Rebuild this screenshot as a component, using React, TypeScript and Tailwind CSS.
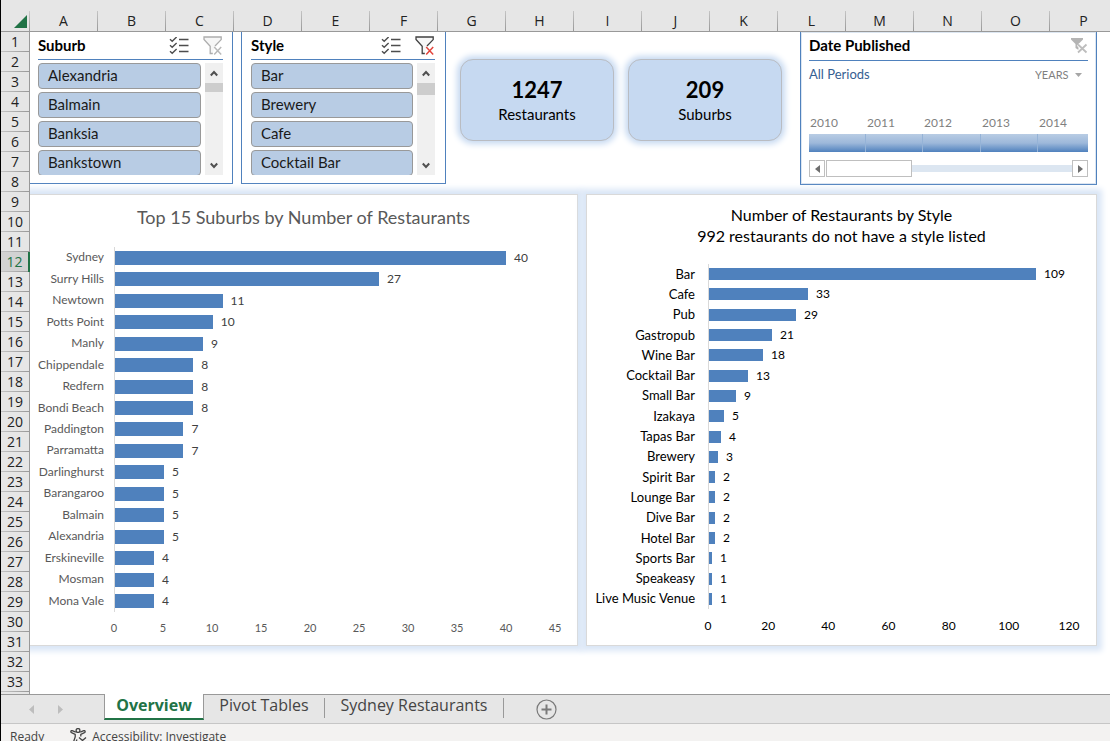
import React from "react";

type Datum = { label: string; value: number };

const columns = "ABCDEFGHIJKLMNOP".split("");
const rows = Array.from({ length: 33 }, (_, i) => i + 1);
const activeRow = 12;

const suburbData: Datum[] = [
  { label: "Sydney", value: 40 },
  { label: "Surry Hills", value: 27 },
  { label: "Newtown", value: 11 },
  { label: "Potts Point", value: 10 },
  { label: "Manly", value: 9 },
  { label: "Chippendale", value: 8 },
  { label: "Redfern", value: 8 },
  { label: "Bondi Beach", value: 8 },
  { label: "Paddington", value: 7 },
  { label: "Parramatta", value: 7 },
  { label: "Darlinghurst", value: 5 },
  { label: "Barangaroo", value: 5 },
  { label: "Balmain", value: 5 },
  { label: "Alexandria", value: 5 },
  { label: "Erskineville", value: 4 },
  { label: "Mosman", value: 4 },
  { label: "Mona Vale", value: 4 },
];

const styleData: Datum[] = [
  { label: "Bar", value: 109 },
  { label: "Cafe", value: 33 },
  { label: "Pub", value: 29 },
  { label: "Gastropub", value: 21 },
  { label: "Wine Bar", value: 18 },
  { label: "Cocktail Bar", value: 13 },
  { label: "Small Bar", value: 9 },
  { label: "Izakaya", value: 5 },
  { label: "Tapas Bar", value: 4 },
  { label: "Brewery", value: 3 },
  { label: "Spirit Bar", value: 2 },
  { label: "Lounge Bar", value: 2 },
  { label: "Dive Bar", value: 2 },
  { label: "Hotel Bar", value: 2 },
  { label: "Sports Bar", value: 1 },
  { label: "Speakeasy", value: 1 },
  { label: "Live Music Venue", value: 1 },
];

function MultiSelectIcon() {
  return (
    <svg width="20" height="18" viewBox="0 0 20 18" fill="none" stroke="#4d4d4d" strokeWidth="1.4" aria-hidden="true">
      <path d="M1 2.2 3.2 4.2 7.6 0M1 8.2l2.2 2 4.4-4.2M1 14.2l2.2 2 4.4-4.2" />
      <path d="M10 2.5h9.5M10 8.5h9.5M10 14.5h9.5" />
    </svg>
  );
}

function ClearFilterIcon({ enabled }: { enabled: boolean }) {
  const funnel = enabled ? "#404040" : "#adadad";
  const cross = enabled ? "#e2443b" : "#b8b8b8";
  return (
    <svg width="20" height="20" viewBox="0 0 20 20" fill="none" aria-hidden="true">
      <path d="M9.8 17.5H7.2V10.2L1 3.5V1h17.2v2.6L12 10" stroke={funnel} strokeWidth="1.3" fill="#f6f6f6" />
      <path d="m11.2 11 7 7.4M18.2 11l-7 7.4" stroke={cross} strokeWidth="1.5" />
    </svg>
  );
}

function Chevron({ up }: { up?: boolean }) {
  return (
    <svg width="8" height="7" viewBox="0 0 8 7" fill="none" stroke="#505050" strokeWidth="2" aria-hidden="true">
      <path d={up ? "M0.8 5.5 4 2l3.2 3.5" : "M0.8 1.5 4 5l3.2-3.5"} />
    </svg>
  );
}

function Slicer({
  title,
  items,
  filtered,
  className,
  thumbClass,
}: {
  title: string;
  items: string[];
  filtered: boolean;
  className: string;
  thumbClass: string;
}) {
  return (
    <section className={`h-[152px] shrink-0 border-b border-r border-[#4f81bd] bg-white ${className}`}>
      <header className="flex h-7 items-center border-b border-[#4f81bd]">
        <h2 className="grow text-[15px] font-bold text-black">{title}</h2>
        <button type="button" aria-label={`Multi-select ${title}`} className="mr-3.5">
          <MultiSelectIcon />
        </button>
        <button type="button" aria-label={`Clear ${title} filter`}>
          <ClearFilterIcon enabled={filtered} />
        </button>
      </header>
      <div className="mt-[3px] flex h-28 gap-1">
        <div className="flex grow flex-col gap-[3px] overflow-hidden">
          {items.map((item) => (
            <button
              key={item}
              type="button"
              className="h-[26px] shrink-0 rounded-[4px] border border-[#999999] bg-[#b8cce4] px-[9px] pb-0.5 text-left text-[15px] leading-[22px] text-[#1a1a1a]"
            >
              {item}
            </button>
          ))}
        </div>
        <div className="flex w-[18px] shrink-0 flex-col items-center bg-[#f0f0f0]">
          <button type="button" aria-label={`Scroll ${title} up`} className="flex h-5 w-full items-center justify-center">
            <Chevron up />
          </button>
          <div className={`w-full bg-[#cdcdcd] ${thumbClass}`} />
          <button type="button" aria-label={`Scroll ${title} down`} className="mt-auto flex h-5 w-full items-center justify-center">
            <Chevron />
          </button>
        </div>
      </div>
    </section>
  );
}

function StatCard({ value, label }: { value: string; label: string }) {
  return (
    <section className="mt-[27px] flex h-[82px] w-[154px] shrink-0 flex-col items-center rounded-[13px] border border-[#b9bcc2] bg-[#c6d9f1] pt-3.5 text-black shadow-[0_0_6px_3px_#c6d9f1]">
      <p className="text-[22px] font-bold leading-8">{value}</p>
      <p className="text-[15px] leading-4">{label}</p>
    </section>
  );
}

function Timeline() {
  const years = ["2010", "2011", "2012", "2013", "2014"];
  return (
    <section className="ml-auto mr-[13px] h-[153px] w-[297px] shrink-0 border-x border-b border-[#4f81bd] bg-white px-2 shadow-[inset_0_0_0_1px_#dce6f1]">
      <header className="flex h-[29px] items-center border-b border-[#4f81bd] pb-0.5">
        <h2 className="grow text-[15px] font-bold text-black">Date Published</h2>
        <button type="button" aria-label="Clear date filter">
          <svg width="17" height="17" viewBox="0 0 17 17" aria-hidden="true">
            <path d="M0 1h12v1.5L7.5 7v6L4.5 11V7L0 2.5Z" fill="#b4b4b4" />
            <path d="m7 7.5 8.500 8M15.500 7.500l-8.500 8" stroke="#fff" strokeWidth="3.5" />
            <path d="m7 7.5 8.500 8M15.500 7.500l-8.500 8" stroke="#bdbdbd" strokeWidth="1.8" />
          </svg>
        </button>
      </header>
      <div className="flex h-7 items-center justify-between pr-1.5">
        <p className="text-[13px] text-[#366092]">All Periods</p>
        <div className="flex items-center">
          <select
            aria-label="Time level"
            defaultValue="YEARS"
            className="w-10 appearance-none bg-transparent text-[11px] text-[#7f7f7f] outline-none"
          >
            <option>YEARS</option>
            <option>QUARTERS</option>
            <option>MONTHS</option>
            <option>DAYS</option>
          </select>
          <svg width="7" height="4" viewBox="0 0 7 4" aria-hidden="true">
            <path d="M0 0h7L3.5 4Z" fill="#a6a6a6" />
          </svg>
        </div>
      </div>
      <div className="mt-6 grid grid-cols-[57fr_57fr_58fr_57fr_50fr]">
        {years.map((year) => (
          <div key={year} className="group">
            <p className="h-[21px] pl-px text-[12px] leading-5 text-[#7f7f7f]">{year}</p>
            <div className="h-[18px] border-r border-[#95b3d7] bg-linear-to-b from-[#b8cce4] via-[#9db8da] to-[#4f81bd] group-last:border-r-0" />
          </div>
        ))}
      </div>
      <div className="mt-2 flex h-[17px] items-center">
        <button type="button" aria-label="Earlier" className="flex h-[17px] w-4 items-center justify-center border border-[#bfbfbf]">
          <svg width="5" height="8" viewBox="0 0 5 8" aria-hidden="true">
            <path d="M5 0v8L0 4Z" fill="#6e6e6e" />
          </svg>
        </button>
        <div className="ml-px h-[17px] w-[86px] border border-[#bfbfbf] bg-white" />
        <div className="h-[7px] grow bg-[#dce6f1]" />
        <button type="button" aria-label="Later" className="flex h-[17px] w-4 items-center justify-center border border-[#bfbfbf]">
          <svg width="5" height="8" viewBox="0 0 5 8" aria-hidden="true">
            <path d="M0 0v8l5-4Z" fill="#6e6e6e" />
          </svg>
        </button>
      </div>
    </section>
  );
}

function BarChart({
  data,
  max,
  step,
  labelClass,
  plotClass,
  barClass,
  valueClass,
}: {
  data: Datum[];
  max: number;
  step: number;
  labelClass: string;
  plotClass: string;
  barClass: string;
  valueClass: string;
}) {
  const ticks = Array.from({ length: max / step + 1 }, (_, i) => i * step);
  return (
    <>
      <div className={`flex ${plotClass}`}>
        <div className={`flex shrink-0 flex-col text-right ${labelClass}`}>
          {data.map((d) => (
            <div key={d.label} className="flex flex-1 items-center justify-end whitespace-nowrap pb-px leading-4">
              {d.label}
            </div>
          ))}
        </div>
        <div className="flex grow flex-col border-l border-[#d9d9d9]">
          {data.map((d) => (
            <div key={d.label} className="flex flex-1 items-center">
              <div className={`bg-[#4f81bd] ${barClass}`} style={{ width: `${(d.value / max) * 100}%` }} />
              <span className={`ml-2 w-0 text-[12px] leading-4 ${valueClass}`}>{d.value}</span>
            </div>
          ))}
        </div>
      </div>
      <div className="mt-2 flex">
        <div className={`shrink-0 ${labelClass}`} />
        <div className="flex grow justify-between">
          {ticks.map((t) => (
            <span key={t} className="flex w-0 justify-center">
              {t}
            </span>
          ))}
        </div>
      </div>
    </>
  );
}

function ColumnHeaders() {
  return (
    <div className="flex h-8 shrink-0 items-end overflow-hidden border-b border-[#999999] bg-[#e6e6e6] text-[14px] text-[#222222]">
      <div className="flex h-5 w-[29px] shrink-0 justify-end">
        <svg className="mr-0.5 mt-1" width="13" height="13" viewBox="0 0 13 13" aria-hidden="true">
          <path d="M13 0v13H0Z" fill="#217346" />
        </svg>
        <div className="h-full w-px bg-linear-to-b from-[#cccccc] to-[#999999]" />
      </div>
      {columns.map((c) => (
        <div key={c} className="flex h-5 w-[68px] shrink-0">
          <span className="grow text-center leading-5">{c}</span>
          <div className="h-full w-px bg-linear-to-b from-[#c4c4c4] to-[#999999]" />
        </div>
      ))}
    </div>
  );
}

function RowHeaders() {
  return (
    <div className="flex w-[29px] shrink-0 flex-col overflow-hidden bg-[#e6e6e6] text-[14px] text-[#222222]">
      {rows.map((r) => (
        <div
          key={r}
          className={
            r === activeRow
              ? "flex h-5 shrink-0 flex-col border-r-2 border-[#217346] bg-[#d2d2d2] text-[#217346]"
              : "flex h-5 shrink-0 flex-col border-r border-[#999999]"
          }
        >
          <span className="h-[19px] text-center leading-[19px]">{r}</span>
          <div className="h-px bg-linear-to-r from-[#c4c4c4] to-[#999999]" />
        </div>
      ))}
      <div className="grow border-r border-[#999999]" />
    </div>
  );
}

function SheetTabs() {
  return (
    <nav className="flex h-[30px] shrink-0 border-b border-[#c6c6c6] bg-[#e6e6e6] text-[16px] text-[#444444]">
      <div className="flex w-[103px] items-center gap-6 border-t border-[#999999] pl-7">
        <button type="button" aria-label="Previous sheet">
          <svg width="5" height="9" viewBox="0 0 5 9" aria-hidden="true">
            <path d="M5 0v9L0 4.5Z" fill="#bdbdbd" />
          </svg>
        </button>
        <button type="button" aria-label="Next sheet">
          <svg width="5" height="9" viewBox="0 0 5 9" aria-hidden="true">
            <path d="M0 0v9l5-4.5Z" fill="#bdbdbd" />
          </svg>
        </button>
      </div>
      <button type="button" className="h-[26px] w-[100px] border-x border-b-2 border-x-[#999999] border-b-[#217346] bg-white pb-0.5 font-bold leading-[22px] text-[#217346]">
        Overview
      </button>
      <div className="flex grow items-start border-t border-[#999999]">
        <button type="button" className="mt-[3px] h-5 w-[121px] border-r border-[#999999] pb-1.5 leading-[14px]">
          Pivot Tables
        </button>
        <button type="button" className="mt-[3px] h-5 w-[179px] border-r border-[#999999] pb-1.5 leading-[14px]">
          Sydney Restaurants
        </button>
        <button type="button" aria-label="New sheet" className="ml-8 mt-1">
          <svg width="21" height="21" viewBox="0 0 21 21" fill="none" stroke="#7a7a7a" aria-hidden="true">
            <circle cx="10.5" cy="10.5" r="9.5" strokeWidth="1.2" />
            <path d="M10.5 5.500v10M5.500 10.500h10" strokeWidth="2" />
          </svg>
        </button>
      </div>
    </nav>
  );
}

function StatusBar() {
  return (
    <footer className="flex h-[17px] shrink-0 items-start overflow-hidden bg-[#f3f2f1] pl-[9px] pt-1 text-[12px] leading-[18px] text-[#444444]">
      <span>Ready</span>
      <svg className="ml-[26px] shrink-0" width="18" height="18" viewBox="0 0 18 18" fill="none" stroke="#444" strokeWidth="1.3" aria-hidden="true">
        <circle cx="8" cy="2.4" r="1.9" />
        <path d="M5.8 4.2 2.2 2.6C.8 2.2.4 4 1.6 4.6L5.2 6.3V9L3.3 14.5c-.3 1.5 1.5 2 2 .8L7 11.500M10.200 4.200l3.600-1.600c1.400-.4 1.800 1.400.6 2L10.800 6.300V8.500" />
        <path d="m9 9.5 7 6M16 9.500l-7 6" />
      </svg>
      <span className="ml-1">Accessibility: Investigate</span>
    </footer>
  );
}

export default function App() {
  return (
    <div className="flex h-screen flex-col overflow-hidden border-l border-black bg-white font-['Open_Sans','Noto_Sans',sans-serif]">
      <ColumnHeaders />
      <div className="flex min-h-0 grow">
        <RowHeaders />
        <main className="min-w-0 grow overflow-hidden font-['Lato',sans-serif]">
          <div className="flex">
            <Slicer
              title="Suburb"
              items={["Alexandria", "Balmain", "Banksia", "Bankstown"]}
              filtered={false}
              className="w-[203px] pl-2 pr-[9px]"
              thumbClass="h-[9px]"
            />
            <Slicer
              title="Style"
              items={["Bar", "Brewery", "Cafe", "Cocktail Bar"]}
              filtered
              className="ml-2 w-[205px] border-l pl-[9px] pr-2.5"
              thumbClass="h-3"
            />
            <div className="ml-3.5 flex gap-3.5">
              <StatCard value="1247" label="Restaurants" />
              <StatCard value="209" label="Suburbs" />
            </div>
            <Timeline />
          </div>
          <div className="mt-[9px] grid grid-cols-[548fr_511fr] gap-2 pr-[13px]">
            <section className="h-[452px] min-w-0 border-y border-r border-[#d9d9d9] bg-white pr-[22px] text-[11px] text-[#595959] shadow-[0_0_6px_5px_#dae6f6]">
              <h2 className="mt-2.5 pl-[22px] text-center text-[18px] leading-6">Top 15 Suburbs by Number of Restaurants</h2>
              <BarChart
                data={suburbData}
                max={45}
                step={5}
                labelClass="w-[84px] pr-2.5 text-[12px]"
                plotClass="mt-[18px] h-[365px]"
                barClass="h-3.5"
                valueClass="text-[#404040]"
              />
            </section>
            <section className="h-[452px] min-w-0 border border-[#d9d9d9] bg-white pr-[27px] text-[12px] text-black shadow-[0_0_6px_5px_#dae6f6]">
              <h2 className="mt-[9px] pl-[27px] text-center text-[16px] leading-[21px]">
                Number of Restaurants by Style
                <br />
                992 restaurants do not have a style listed
              </h2>
              <BarChart
                data={styleData}
                max={120}
                step={20}
                labelClass="w-[121px] pr-[13px] text-[13px]"
                plotClass="mt-[18px] h-[345px]"
                barClass="h-3"
                valueClass="text-black"
              />
            </section>
          </div>
        </main>
      </div>
      <SheetTabs />
      <StatusBar />
    </div>
  );
}
